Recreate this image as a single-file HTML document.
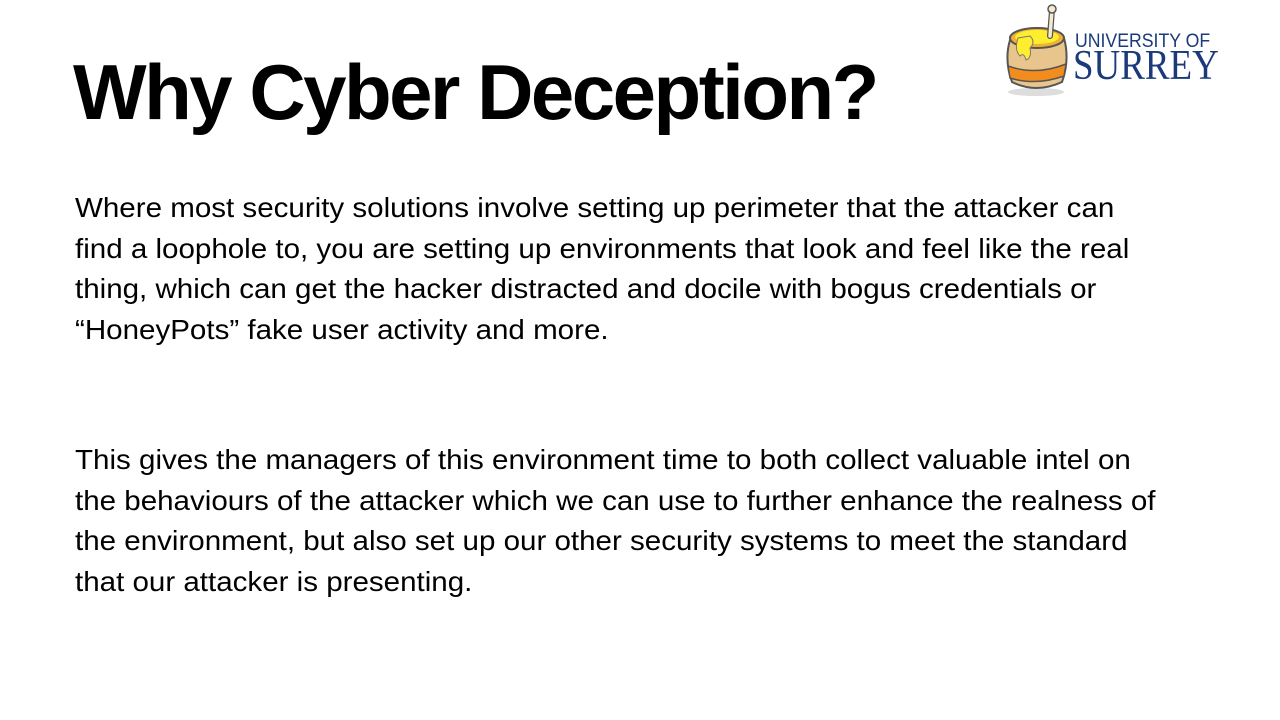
<!DOCTYPE html>
<html><head><meta charset="utf-8"><style>
body{margin:0;width:1280px;height:720px;background:#fff;overflow:hidden;position:relative;font-family:"Liberation Sans",sans-serif;}
h1{position:absolute;left:73px;top:47px;margin:0;font-size:78px;font-weight:bold;letter-spacing:-2.5px;color:#000;white-space:nowrap;}
.p{position:absolute;left:75px;font-size:28px;color:#000;line-height:40.5px;}
.p div{white-space:nowrap;transform:scaleX(1.055);transform-origin:left;}
.u1{position:absolute;left:1075px;top:31px;font-size:19px;color:#1a3a7a;font-family:"Liberation Sans",sans-serif;letter-spacing:0px;transform:scaleX(0.93);transform-origin:left;}
.u2{position:absolute;left:1073px;top:42px;font-size:42px;color:#1a3a7a;font-family:"Liberation Serif",serif;transform:scaleX(0.88);transform-origin:left;}
</style></head><body>
<h1>Why Cyber Deception?</h1>
<div class="p" style="top:188px">
<div>Where most security solutions involve setting up perimeter that the attacker can</div>
<div>find a loophole to, you are setting up environments that look and feel like the real</div>
<div>thing, which can get the hacker distracted and docile with bogus credentials or</div>
<div>“HoneyPots” fake user activity and more.</div>
</div>
<div class="p" style="top:440px">
<div>This gives the managers of this environment time to both collect valuable intel on</div>
<div>the behaviours of the attacker which we can use to further enhance the realness of</div>
<div>the environment, but also set up our other security systems to meet the standard</div>
<div>that our attacker is presenting.</div>
</div>
<svg style="position:absolute;left:1000px;top:0" width="75" height="100" viewBox="0 0 75 100">
<ellipse cx="36" cy="92" rx="28" ry="4" fill="#ddd"/>
<path d="M10 40 Q4 60 12 82 Q36 94 62 82 Q70 60 64 38 Q36 28 10 40Z" fill="#e9c58e" stroke="#555" stroke-width="2"/>
<path d="M8 66 Q36 76 66 64 L64 76 Q36 86 10 78Z" fill="#f28c1c" stroke="#555" stroke-width="1.5"/>
<ellipse cx="37" cy="38" rx="27" ry="10" fill="#f0b030" stroke="#555" stroke-width="2"/>
<ellipse cx="37" cy="37" rx="22" ry="7" fill="#ffee30"/>
<path d="M18 38 Q14 50 20 56 Q24 52 26 60 Q32 58 30 48 Q36 42 30 36Z" fill="#ffee30" stroke="#777" stroke-width="1"/>
<path d="M50 36 L52 10" stroke="#555" stroke-width="6" stroke-linecap="round"/>
<path d="M50 36 L52 10" stroke="#f5ead0" stroke-width="3.5" stroke-linecap="round"/>
<circle cx="52" cy="9" r="4" fill="#f5ead0" stroke="#555" stroke-width="1.5"/>
</svg>
<div class="u1">UNIVERSITY OF</div>
<div class="u2">SURREY</div>
</body></html>
